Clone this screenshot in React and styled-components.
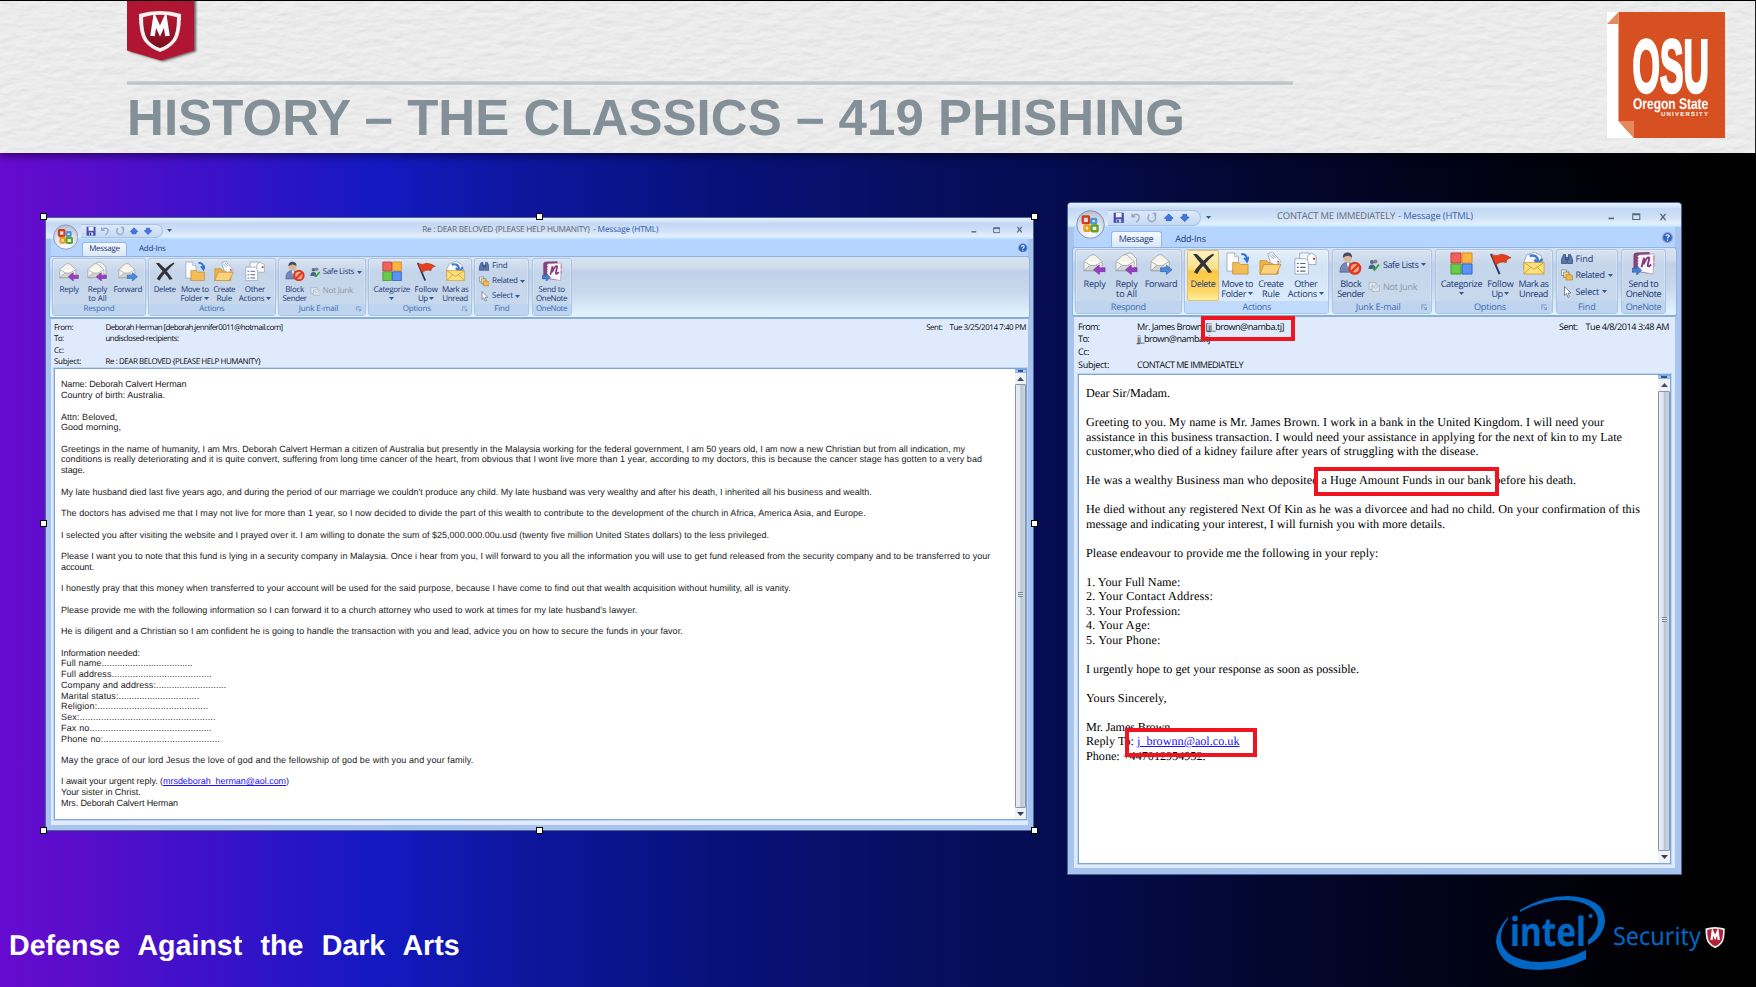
import React, { useLayoutEffect, useRef, useState } from "react";
import styled, { createGlobalStyle, ThemeProvider, css } from "styled-components";

const Global = createGlobalStyle`
  * { box-sizing: border-box; }
  body { margin: 0; background: #000; text-rendering: geometricPrecision; }
  svg { display: block; flex: none; }
`;

/* horizontal and vertical lengths that follow the window's own scale */
const x = (n) => ({ theme }) => `${n * theme.sx}px`;
const y = (n) => ({ theme }) => `${n * theme.sy}px`;

const FitSpan = styled.span`
  display: inline-block;
  white-space: pre;
`;

/* Sets the letter spacing so that the text takes a given width. */
function Fit({ w, children }) {
  const ref = useRef(null);
  const [gap, setGap] = useState(0);
  useLayoutEffect(() => {
    const el = ref.current;
    el.style.letterSpacing = "0px";
    const natural = el.getBoundingClientRect().width;
    const next = (w - natural) / el.textContent.length;
    el.style.letterSpacing = `${next}px`;
    setGap(next);
  }, [w]);
  return <FitSpan ref={ref} style={{ letterSpacing: `${gap}px` }}>{children}</FitSpan>;
}

/* ---------- slide ---------- */

const Slide = styled.div`
  width: 1756px;
  height: 987px;
  overflow: hidden;
  display: flex;
  flex-direction: column;
  font-family: "Liberation Sans", Arial, sans-serif;
  background: linear-gradient(90deg, #660bd0 0%, #5b0dcb 4%, #3812c8 13%, #1419c2 21.5%, #0f17a4 28%, #08117c 40%, #070f60 52%, #050b4e 61%, #030834 70%, #02041e 80%, #01020c 88%, #000 97%);
`;

const Header = styled.header`
  position: relative;
  height: 153px;
  flex: none;
  border-top: 1px solid #000;
  border-right: 1px solid #222;
  background: #ebebeb;
  box-shadow: 0 2px 9px rgba(0, 0, 0, 0.6);
  display: flex;
  justify-content: space-between;
  padding: 0 30px 0 127px;
`;

const Paper = styled.svg`
  position: absolute;
  inset: 0;
`;

const HeaderMain = styled.div`
  position: relative;
  width: 1166px;
  display: flex;
  flex-direction: column;
`;

const Rule = styled.div`
  height: 4px;
  margin-top: 16px;
  background: linear-gradient(#d3d8d9, #b9c0c2 50%, #cdd3d4);
`;

const Title = styled.h1`
  margin: 5px 0 0 0;
  font-size: 51px;
  line-height: 56px;
  font-weight: bold;
  color: #839097;
`;

const OsuBox = styled.div`
  position: relative;
  padding-top: 11px;
`;

const Stage = styled.main`
  height: 722px;
  flex: none;
  display: flex;
  align-items: flex-start;
  padding-left: 45px;
  gap: 33px;
`;

const Footer = styled.footer`
  flex: 1;
  display: flex;
  justify-content: space-between;
  padding: 20px 29px 0 9px;
`;

const Course = styled.div`
  padding-top: 33.5px;
  font-size: 28.6px;
  line-height: 34px;
  font-weight: bold;
  word-spacing: 10.3px;
  color: #fff;
`;

/* ---------- mail window ---------- */

const Frame = styled.section`
  position: relative;
  width: ${(p) => p.theme.w}px;
  height: ${(p) => p.theme.h}px;
  margin-top: ${(p) => p.theme.top}px;
  border: 1px solid #4a6590;
  border-radius: 4px 4px 0 0;
  background: #a7c4ef;
  display: flex;
  flex-direction: column;
  font-family: "Open Sans", "Noto Sans", sans-serif;
  font-size: ${(p) => p.theme.font}px;
  font-weight: 500;
  color: #1a3876;
`;

const TitleBar = styled.div`
  height: ${(p) => p.theme.bar}px;
  flex: none;
  display: flex;
  align-items: center;
  border-radius: 3px 3px 0 0;
  background: linear-gradient(#e6f1ff 0, #d3e4fa 16%, #c3d8f4 24%, #cfe1f8 60%, #e3effd 88%, #b9e0fb 100%);
`;

const QuickBar = styled.div`
  display: flex;
  align-items: center;
  gap: ${x(5)};
  height: ${y(16)};
  width: ${x(93)};
  margin-top: ${y(5)};
  margin-left: ${x(40)};
  padding-left: ${x(5)};
  border: 1px solid #a9c2e4;
  border-left: none;
  border-radius: 0 9px 9px 0;
  background: linear-gradient(#dce9fa, #c6d9f2);
`;

const MoreMark = styled.div`
  width: ${x(14)};
  margin-top: ${y(4)};
  display: flex;
  justify-content: center;
`;

const Caption = styled.div`
  margin-left: ${(p) => p.theme.captionGap}px;
  padding-top: 2px;
  font-weight: 400;
  font-size: ${(p) => p.theme.font + 0.3}px;
  line-height: 12px;
  color: #62676f;
  display: flex;
`;

const CaptionApp = styled.span`
  color: #3460aa;
  padding-left: 3px;
`;

const Controls = styled.div`
  margin-left: auto;
  padding-top: ${y(3)};
  padding-right: ${(p) => p.theme.controlsRight}px;
  display: flex;
  align-items: center;
  gap: ${x(18)};
`;

const Orb = styled.div`
  position: absolute;
  left: ${x(7.5)};
  top: ${(p) => p.theme.orbTop}px;
`;

const TabRow = styled.div`
  height: ${(p) => p.theme.tabs}px;
  flex: none;
  margin: 0 ${(p) => p.theme.edge}px;
  padding-left: ${(p) => p.theme.tabInset}px;
  display: flex;
  align-items: flex-end;
  background: #b5d4ff;
  line-height: ${y(16)};
`;

const Tab = styled.div`
  width: ${x(51)};
  height: ${y(16)};
  display: flex;
  justify-content: center;
  ${(p) => p.$on && css`
    background: linear-gradient(#f4f9ff, #dbe8f8);
    border: 1px solid #93b9ea;
    border-bottom: none;
    border-radius: 3px 3px 0 0;
    line-height: ${y(14)};
  `}
  ${(p) => !p.$on && css`margin-left: ${x(3.5)};`}
`;

const Help = styled.div`
  margin-left: auto;
  padding-right: ${(p) => p.theme.helpRight}px;
  align-self: center;
`;

const Ribbon = styled.div`
  height: ${(p) => p.theme.ribbon}px;
  flex: none;
  margin: 0 ${(p) => p.theme.edge - 2}px;
  padding: 1px 2px 1px;
  display: flex;
  gap: ${x(2.6)};
  border: 1px solid #8fb4e2;
  border-bottom: 2px solid #8badd3;
  border-radius: 3px;
  background: linear-gradient(#d8e3f1 0, #d0dcec 18%, #c0d0e8 24%, #c8d9ed 60%, #def0fb 92%, #dff3fd 100%);
`;

const GroupBox = styled.div`
  width: ${(p) => x(p.$w)};
  display: flex;
  flex-direction: column;
  border: 1px solid #a9c4e4;
  border-radius: 3px;
  box-shadow: inset 0 0 0 1px rgba(255, 255, 255, 0.25);
  background: ${(p) => (p.$hot ? "linear-gradient(#e6f0fb, #d3e4f7 25%, #dfedfc)" : "linear-gradient(#d9e4f2, #c5d5ea 24%, #c9d9ee)")};
`;

const GroupBody = styled.div`
  flex: 1;
  min-height: 0;
  display: flex;
  padding-left: ${(p) => x(p.$pad)};
`;

const GroupLabel = styled.div`
  height: ${y(12)};
  flex: none;
  line-height: ${y(11.5)};
  padding-right: ${(p) => (p.$launch ? x(8) : "0")};
  display: flex;
  justify-content: center;
  position: relative;
  color: #3e6bae;
  background: ${(p) => (p.$hot ? "#c0dbfb" : "#bfd5ef")};
`;

const Launcher = styled.div`
  position: absolute;
  right: ${x(4)};
  top: ${y(2.5)};
`;

const Tool = styled.div`
  width: ${(p) => x(p.$w)};
  height: ${y(51)};
  padding-top: ${y(2)};
  display: flex;
  flex-direction: column;
  align-items: center;
  line-height: ${y(10)};
  border-radius: 2px;
  ${(p) => p.$hot && css`
    background: linear-gradient(#fdf3c6 0, #fbdf8c 36%, #fcc841 42%, #fdd767 80%, #fff0a0);
    box-shadow: inset 0 0 0 1px #e3c16c;
  `}
`;

const ToolText = styled.div`
  display: flex;
  align-items: center;
  gap: ${x(2)};
  margin-top: ${(p) => (p.$first ? y(3.8) : "0")};
  ${(p) => p.$alone && css`margin-top: ${y(3.5)};`}
`;

const SmallTools = styled.div`
  display: flex;
  flex-direction: column;
  padding-top: ${(p) => y(p.$top)};
  gap: ${(p) => y(p.$gap)};
`;

const SmallTool = styled.div`
  height: ${y(12)};
  line-height: ${y(12)};
  display: flex;
  align-items: center;
  gap: ${x(3)};
  color: ${(p) => (p.$off ? "#8f98a5" : "inherit")};
`;

const Inner = styled.div`
  flex: 1;
  min-height: 0;
  margin: 0 ${(p) => p.theme.edge}px ${(p) => p.theme.edge}px;
  padding: ${(p) => p.theme.innerPad};
  display: flex;
  flex-direction: column;
  background: #dfebfd;
`;

const Fields = styled.div`
  position: relative;
  flex: none;
  display: grid;
  grid-template-columns: ${(p) => p.theme.fieldCol}px 1fr auto;
  grid-auto-rows: ${(p) => p.theme.fieldRow}px;
  align-items: center;
  line-height: ${(p) => p.theme.fieldRow}px;
  color: #0c0c0c;
  height: ${(p) => p.theme.fieldsH}px;
  padding: 0 ${(p) => p.theme.sentRight}px 0 0;
`;

const Sent = styled.div`
  display: flex;
  gap: ${x(8)};
`;

const Cell = styled.div`
  grid-column: ${(p) => p.$col};
  grid-row: ${(p) => p.$row};
  height: 100%;
`;

const Sheet = styled.div`
  flex: 1;
  min-height: 0;
  display: flex;
  justify-content: space-between;
  border: 1px solid #7fa6dc;
  outline: 1px solid #bdd4f2;
  background: #fff;
`;

const Letter = styled.div`
  position: relative;
  padding: ${(p) => p.theme.letterPad};
  font-family: ${(p) => p.theme.letterFont};
  font-weight: 400;
  font-size: ${(p) => p.theme.letterSize}px;
  line-height: ${(p) => p.theme.letterLine}px;
  color: ${(p) => p.theme.ink};
`;

const Line = styled.div`
  height: ${(p) => p.theme.letterLine}px;
`;

const Link = styled.span`
  color: #1a10ff;
  text-decoration: underline;
`;

const Bar = styled.div`
  width: ${(p) => p.theme.scroll}px;
  display: flex;
  flex-direction: column;
  align-items: center;
  background: #f1f1f3;
`;

const Splitter = styled.div`
  width: 100%;
  height: 4px;
  border-top: 1px solid #7ba6e4;
  background: linear-gradient(90deg, #a6c8f7 25%, #34568c 25%, #34568c 75%, #a6c8f7 75%);
  border-bottom: 1px solid #8db5ee;
`;

const ArrowBox = styled.div`
  height: ${(p) => p.theme.arrowBox}px;
  display: flex;
  align-items: center;
`;

const Thumb = styled.div`
  flex: 1;
  width: 100%;
  display: flex;
  align-items: center;
  justify-content: center;
  border: 1px solid #8a94ab;
  border-radius: 1px;
  background: linear-gradient(90deg, #e9edf2, #e2e7ee 40%, #b9c7da 55%, #c9d3e2 90%);
`;

const Grip = styled.div`
  width: 5px;
  height: 5px;
  margin-bottom: 4px;
  border-top: 1px solid #7a8496;
  border-bottom: 1px solid #7a8496;
  background: linear-gradient(#dfe5ee 1px, #7a8496 1px, #7a8496 2px, #dfe5ee 2px);
`;

const Mark = styled.div`
  position: absolute;
  left: ${(p) => p.$x}px;
  top: ${(p) => p.$y}px;
  width: ${(p) => p.$w}px;
  height: ${(p) => p.$h}px;
  border: 4px solid #ee1520;
  z-index: 2;
`;

const Handle = styled.div`
  position: absolute;
  left: ${(p) => p.$x}px;
  top: ${(p) => p.$y}px;
  width: 7px;
  height: 7px;
  border: 1px solid #000;
  background: #fff;
`;

/* ---------- drawings ---------- */

const Icon = styled.svg.attrs({ viewBox: "0 0 24 24" })`
  width: ${(p) => x(p.$s || 23)};
  height: ${(p) => y(p.$s || 23)};
`;

const Caret = () => (
  <svg width="5" height="3" viewBox="0 0 5 3"><path d="M0 0H5L2.5 3Z" fill="#35568f" /></svg>
);

const Envelope = ({ back }) => (
  <g stroke="#8d949f" strokeWidth=".7">
    {back && <path d="M7 8L12 1.500L17 1L22.500 7V16H9Z" fill="#f3f3f0" />}
    <path d="M1 10L8 3.500Q10.500 2 13 3.500L20 10V19.500H1Z" fill="#f5f3ea" />
    <path d="M1 19.500L8 13H13L20 19.500Z" fill="#d3d3cf" />
    <path d="M1 10L8 14H13L20 10" fill="#fffdf5" />
  </g>
);

const art = {
  reply: <><Envelope /><path d="M11 18.500L17 13.500V16.500H23V20.500H17V23.500Z" fill="#9a3fc0" stroke="#6d2393" strokeWidth=".6" /></>,
  replyAll: <><Envelope back /><path d="M11 18.500L17 13.500V16.500H23V20.500H17V23.500Z" fill="#9a3fc0" stroke="#6d2393" strokeWidth=".6" /></>,
  forward: <><Envelope /><path d="M23 18.500L17 13.500V16.500H11V20.500H17V23.500Z" fill="#4b8be0" stroke="#2457a8" strokeWidth=".6" /></>,
  del: <path d="M1 2L5 2Q9 6 12 9Q17 4 22 1.500L23 3Q18 7 14 12Q18 17 21 21L17 22Q15 18 11.500 14.500Q8 18 5.500 23L2 21Q5 16 9 12Q5 7 1 2Z" fill="#33343a" />,
  move: <><path d="M1 1H9L13 5V20H1Z" fill="#fdfdff" stroke="#8e9db5" strokeWidth=".8" /><path d="M9 1V5H13" fill="#dfe6f2" stroke="#8e9db5" strokeWidth=".6" /><path d="M16 2Q22 2 22 8M19 6L22 10L24 5" fill="none" stroke="#2f6fd0" strokeWidth="2" /><path d="M7 11H13L15 13H23V23H7Z" fill="#f2bd57" stroke="#c48a28" strokeWidth=".8" /></>,
  create: <><path d="M1 9H8L10 11H20V23H1Z" fill="#eeb24a" stroke="#c48a28" strokeWidth=".8" /><path d="M9 2L14 0L23 10L17 14L12 11Z" fill="#f8fafd" stroke="#8e9db5" strokeWidth=".8" /><path d="M11 3L15 7M13 2L17 6" stroke="#7d8797" strokeWidth=".8" /><circle cx="20" cy="10" r="1" fill="#d43" /><path d="M5 13H23L18 23H1Z" fill="#fbd27c" stroke="#c48a28" strokeWidth=".8" /></>,
  other: <><path d="M6 1H16V12H6Z" fill="#f4f7fc" stroke="#8e9db5" strokeWidth=".8" /><path d="M14 4L18 1L23 4V13H14Z" fill="#fbfbfd" stroke="#8e9db5" strokeWidth=".8" /><rect x="20" y="6" width="2" height="2" fill="#d22" /><path d="M1 7H12L15 10V23H1Z" fill="#fdfeff" stroke="#8e9db5" strokeWidth=".8" /><path d="M3 12H5M6.500 12H12M3 16H5M6.500 16H12M3 20H5M6.500 20H12" stroke="#56678c" strokeWidth="1.200" /></>,
  block: <><circle cx="9" cy="6" r="4.600" fill="#d9b79b" /><path d="M4 6Q4 0 9.500 .500Q14 1 13.500 6Q10 2 4 6Z" fill="#474c58" /><path d="M1 21Q1 11 9 11Q16 11 17 21Z" fill="#7288ba" stroke="#43568a" strokeWidth=".7" /><path d="M8 11L9.500 17L11 11Z" fill="#fff" /><circle cx="16.500" cy="17" r="5.600" fill="#f6a68c" stroke="#dd3a1c" strokeWidth="2.400" /><path d="M12.500 21L20.500 13" stroke="#dd3a1c" strokeWidth="2.400" /></>,
  categorize: <><path d="M1 1H11.500V11.500H1Z" fill="#f2605a" stroke="#c83a35" /><path d="M12.500 1H23V11.500H12.500Z" fill="#fbb440" stroke="#d58a1c" /><path d="M1 12.500H11.500V23H1Z" fill="#6acb4a" stroke="#3f9d2c" /><path d="M12.500 12.500H23V23H12.500Z" fill="#5b93f5" stroke="#2f62c8" /></>,
  flag: <><path d="M2 2L11 23" stroke="#27355c" strokeWidth="2" /><path d="M2 2.500Q8 5 12 2.500Q16 2 23 6Q18 7 18 11Q12 9 7 13.500Z" fill="#e2401f" stroke="#a92712" strokeWidth=".6" /></>,
  unread: <><path d="M2 10L5 3L13 0L20 4L22 11V18H2Z" fill="#f6f9fd" stroke="#8e9db5" strokeWidth=".8" /><path d="M8 4Q16 2 17 10M13 8L17.500 13L21 7" fill="none" stroke="#3f78d8" strokeWidth="2.600" /><path d="M2 11H23V23H2Z" fill="#fce07e" stroke="#c89b2d" strokeWidth=".8" /><path d="M2 11L12.500 18L23 11M2 23L9 16M23 23L16 16" fill="none" stroke="#c89b2d" strokeWidth=".9" /></>,
  onenote: <><path d="M2 3Q2 1 5 1L18 .500L17 22L5 20Q2 20 2 17Z" fill="#8b4480" stroke="#66305f" strokeWidth=".7" /><path d="M7 3L23 2L22 23L6 20Z" fill="#fbf6fa" stroke="#a98aa6" strokeWidth=".6" /><path d="M6 5H8M6 8H8M6 11H8M6 14H8" stroke="#fff" strokeWidth="1.400" /><path d="M10 16L12.500 6Q12.500 9 12 13Q16 4 18 6Q18 8 16.500 13Q16 17 20 13" fill="none" stroke="#8b3a82" strokeWidth="2" /><path d="M23 4V9M23 11V15" stroke="#c98abf" strokeWidth="1.500" /><path d="M0 17H5V14L10 19L5 24V21H0Z" fill="#4b80cf" stroke="#2b559b" strokeWidth=".6" /></>,
  safe: <><circle cx="8" cy="6" r="4" fill="#5c6474" /><circle cx="15" cy="5" r="4" fill="#7b8392" /><path d="M1 20Q1 11 8 11Q15 11 15 20Z" fill="#4a5f8c" /><path d="M9 17L13 22L22 11" fill="none" stroke="#2fa32b" strokeWidth="3.500" /></>,
  notJunk: <g fill="#dde4ee" stroke="#a5afbd" strokeWidth="1.500"><path d="M2 3H16V17H2Z" /><path d="M8 9H23V21H8Z" /><path d="M8 9L15.500 15L23 9" /></g>,
  find: <g fill="#5b78ab" stroke="#27427a" strokeWidth="1.400"><path d="M5 3H9V8L11 12V21H1V13Z" /><path d="M15 3H19L23 13V21H13V12L15 8Z" /><path d="M9 9H15V13H9Z" /></g>,
  related: <g stroke="#5a5f6b" strokeWidth="1.200"><path d="M1 2H11V13H1Z" fill="#fff" /><path d="M5 6H16V17H5Z" fill="#f6d78a" /><path d="M10 11H20L23 14V22H10Z" fill="#efb94b" stroke="#a97a1e" /></g>,
  select: <path d="M7 1V19L11 15L14 23L17 21.500L14 14H20Z" fill="#fff" stroke="#5c6880" strokeWidth="1.500" />,
  save: <><path d="M2 2H22V22H2Z" fill="#4a50b8" stroke="#2f3590" /><path d="M6 2H18V11H6Z" fill="#f0f3fc" /><path d="M7 15H17V22H7Z" fill="#c9cfee" /><path d="M9 16H12V22H9Z" fill="#2f3590" /></>,
  undo: <path d="M4 3V10H11M5 9Q12 2 18 7Q22 14 13 21" fill="none" stroke="#98a8c2" strokeWidth="3" />,
  redo: <path d="M14 3H20V9M7 5Q1 13 7 18Q14 23 19 16Q21 11 18 6" fill="none" stroke="#98a8c2" strokeWidth="3" />,
  up: <path d="M12 4L21 13L17 14V18H7V14L3 13Z" fill="#3f78e0" stroke="#2358bd" strokeWidth="1.500" />,
  down: <path d="M12 20L21 11L16 10V5H8V10L3 11Z" fill="#3f78e0" stroke="#2358bd" strokeWidth="1.500" />,
  launch: <path d="M3 20V3H20M9 9L19 19M20 11V20H11" fill="none" stroke="#5d83b8" strokeWidth="2.500" />,
  min: <path d="M2 20H22" stroke="#5c6878" strokeWidth="6" />,
  max: <path d="M2 5H22V21H2ZM2 8H22" fill="none" stroke="#5c6878" strokeWidth="3" />,
  close: <path d="M2 2H7L12 9L17 2H22L15 12L22 22H17L12 15L7 22H2L9 12Z" fill="#5c6878" />,
};

const Pic = ({ n, s }) => <Icon $s={s}>{art[n]}</Icon>;

const OrbArt = styled.svg.attrs({ viewBox: "0 0 30 30" })`
  width: ${x(29)};
  height: ${y(29)};
`;

const HelpArt = styled.svg.attrs({ viewBox: "0 0 12 12" })`
  width: ${x(11)};
  height: ${y(11)};
`;

function OfficeOrb({ id }) {
  return (
    <OrbArt>
      <defs>
        <radialGradient id={id} cx="50%" cy="80%" r="75%">
          <stop offset="0" stopColor="#fff" />
          <stop offset=".6" stopColor="#dfe3ec" />
          <stop offset="1" stopColor="#b9c1d2" />
        </radialGradient>
      </defs>
      <circle cx="15" cy="15" r="14.300" fill={`url(#${id})`} stroke="#7d8bab" strokeWidth=".9" />
      <g fill="none" strokeWidth="2.500">
        <rect x="7" y="6.800" width="6.500" height="6.800" rx=".8" stroke="#d23c18" />
        <rect x="15.800" y="9.200" width="5" height="4.600" rx=".8" stroke="#4a94dd" />
        <rect x="8.800" y="16" width="5" height="5.500" rx=".8" stroke="#f09a18" />
        <rect x="16" y="16" width="6.300" height="6" rx=".8" stroke="#5fa52b" />
      </g>
    </OrbArt>
  );
}

/* ---------- ribbon data ---------- */

const groups = [
  { label: ["Respond", 35], w: 106.7, pad: 2.5, tools: [
    { icon: "reply", w: 32, text: [["Reply", 22]] },
    { icon: "replyAll", w: 32, text: [["Reply", 22], ["to All", 21]] },
    { icon: "forward", w: 37, text: [["Forward", 32.5]] } ] },
  { label: ["Actions", 28.5], w: 145, pad: 1.5, id: "actions", tools: [
    { icon: "del", w: 32.5, text: [["Delete", 25]], id: "delete" },
    { icon: "move", w: 36, text: [["Move to", 31.5], ["Folder", 25, true]] },
    { icon: "create", w: 31, text: [["Create", 25], ["Rule", 17.5]] },
    { icon: "other", w: 39, text: [["Other", 23], ["Actions", 29, true]] } ] },
  { label: ["Junk E-mail", 45], w: 100.5, pad: 1, launch: true,
    tools: [{ icon: "block", w: 34, text: [["Block", 21.5], ["Sender", 27.5]] }],
    small: { top: 8.5, gap: 10, items: [["safe", "Safe Lists", 35.5, true], ["notJunk", "Not Junk", 34.5, false, true]] } },
  { label: ["Options", 32], w: 118, pad: 4, launch: true, tools: [
    { icon: "categorize", w: 43, text: [["Categorize", 41.5], ["", 0, true]] },
    { icon: "flag", w: 35, text: [["Follow", 26.5], ["Up", 11, true]] },
    { icon: "unread", w: 31, text: [["Mark as", 30], ["Unread", 29]] } ] },
  { label: ["Find", 17.5], w: 62.5, pad: 4, tools: [],
    small: { top: 2.5, gap: 4.7, items: [["find", "Find", 17.5], ["related", "Related", 29, true], ["select", "Select", 23.5, true]] } },
  { label: ["OneNote", 35.5], w: 45.5, pad: 0, tools: [
    { icon: "onenote", w: 43.5, text: [["Send to", 30], ["OneNote", 35.5]] } ] },
];

function RibbonGroup({ g, hot, sx }) {
  const lit = hot && g.id === "actions";
  return (
    <GroupBox $w={g.w} $hot={lit}>
      <GroupBody $pad={g.pad}>
        {g.tools.map((t) => (
          <Tool key={t.icon} $w={t.w} $hot={hot && t.id === "delete"}>
            <Pic n={t.icon} />
            {t.text.map(([s, w, more], i) => (
              <ToolText key={i} $first={i === 0} $alone={!s}>
                {s && <Fit w={w * sx}>{s}</Fit>}
                {more && <Caret />}
              </ToolText>
            ))}
          </Tool>
        ))}
        {g.small && (
          <SmallTools $top={g.small.top} $gap={g.small.gap}>
            {g.small.items.map(([icon, s, w, more, off]) => (
              <SmallTool key={s} $off={off}>
                <Pic n={icon} s={12} />
                <Fit w={w * sx}>{s}</Fit>
                {more && <Caret />}
              </SmallTool>
            ))}
          </SmallTools>
        )}
      </GroupBody>
      <GroupLabel $hot={lit} $launch={g.launch}>
        <Fit w={g.label[1] * sx}>{g.label[0]}</Fit>
        {g.launch && <Launcher><Pic n="launch" s={6.5} /></Launcher>}
      </GroupLabel>
    </GroupBox>
  );
}

function MailWindow({ theme, mail, fieldMarks, letterMarks, children }) {
  const { sx } = theme;
  return (
    <ThemeProvider theme={theme}>
      <Frame>
        <TitleBar>
          <QuickBar>
            {["save", "undo", "redo", "up", "down"].map((n) => <Pic key={n} n={n} s={11.5} />)}
          </QuickBar>
          <MoreMark><Caret /></MoreMark>
          <Caption>
            <Fit w={mail.caption[1]}>{mail.caption[0]}</Fit>
            <CaptionApp><Fit w={mail.app}>- Message (HTML)</Fit></CaptionApp>
          </Caption>
          <Controls>
            <Pic n="min" s={6.5} />
            <Pic n="max" s={8.5} />
            <Pic n="close" s={8} />
          </Controls>
        </TitleBar>
        <TabRow>
          <Tab $on><Fit w={34.5 * sx}>Message</Fit></Tab>
          <Tab><Fit w={30.5 * sx}>Add-Ins</Fit></Tab>
          <Help>
            <HelpArt>
              <circle cx="6" cy="6" r="5.400" fill="#2d62c9" stroke="#8fa7cf" strokeWidth="1.200" />
              <path d="M4.200 4.500Q4.500 3 6 3Q8 3.200 7.600 5Q6 6 6 7.200M6 8.300V9.600" fill="none" stroke="#fff" strokeWidth="1.300" />
            </HelpArt>
          </Help>
        </TabRow>
        <Ribbon>
          {groups.map((g) => <RibbonGroup key={g.label[0]} g={g} hot={mail.hot} sx={sx} />)}
        </Ribbon>
        <Inner>
          <Fields>
            {mail.fields.map(([name, nw, value, vw], i) => (
              <React.Fragment key={name}>
                <Cell $col={1} $row={i + 1}><Fit w={nw}>{name}</Fit></Cell>
                <Cell $col={2} $row={i + 1}>{value && <Fit w={vw}>{value}</Fit>}</Cell>
              </React.Fragment>
            ))}
            <Cell $col={3} $row={1}>
              <Sent><Fit w={18.5 * sx}>Sent:</Fit><Fit w={mail.sent[1]}>{mail.sent[0]}</Fit></Sent>
            </Cell>
            {fieldMarks}
          </Fields>
          <Sheet>
            <Letter>
              {mail.lines.map((l, i) => (
                <Line key={i}>
                  {l && (
                    <Fit w={l[1]}>
                      {l[0]}{l[2] && <Link>{l[2]}</Link>}{l[3]}
                    </Fit>
                  )}
                </Line>
              ))}
              {letterMarks}
            </Letter>
            <Bar>
              <Splitter />
              <ArrowBox><svg width="7" height="4" viewBox="0 0 7 4"><path d="M0 4H7L3.500 0Z" fill="#3c4f73" /></svg></ArrowBox>
              <Thumb><Grip /></Thumb>
              <ArrowBox><svg width="7" height="4" viewBox="0 0 7 4"><path d="M0 0H7L3.500 4Z" fill="#2c3f63" /></svg></ArrowBox>
            </Bar>
          </Sheet>
        </Inner>
        <Orb><OfficeOrb id={`orb-${theme.w}`} /></Orb>
        {children}
      </Frame>
    </ThemeProvider>
  );
}

/* ---------- mails ---------- */

const dots = (n) => ".".repeat(n);

const herman = {
  caption: ["Re : DEAR BELOVED {PLEASE HELP HUMANITY}", 168],
  app: 65,
  sent: ["Tue 3/25/2014 7:40 PM", 76.5],
  fields: [
    ["From:", 19, "Deborah Herman [deborah.jennifer0011@hotmail.com]", 177],
    ["To:", 9.5, "undisclosed-recipients:", 73],
    ["Cc:", 9.5],
    ["Subject:", 27, "Re : DEAR BELOVED {PLEASE HELP HUMANITY}", 155],
  ],
  lines: [
    ["Name: Deborah Calvert Herman", 125.3],
    ["Country of birth: Australia.", 104],
    null,
    ["Attn: Beloved,", 56.3],
    ["Good morning,", 60],
    null,
    ["Greetings in the name of humanity, I am Mrs. Deborah Calvert Herman a citizen of Australia but presently in the Malaysia working for the federal government, I am 50 years old, I am now a new Christian but from all indication, my", 904],
    ["conditions is really deteriorating and it is quite convert, suffering from long time cancer of the heart, from obvious that I wont live more than 1 year, according to my doctors, this is because the cancer stage has gotten to a very bad", 921],
    ["stage.", 23.7],
    null,
    ["My late husband died last five years ago, and during the period of our marriage we couldn't produce any child. My late husband was very wealthy and after his death, I inherited all his business and wealth.", 810.7],
    null,
    ["The doctors has advised me that I may not live for more than 1 year, so I now decided to divide the part of this wealth to contribute to the development of the church in Africa, America Asia, and Europe.", 804.7],
    null,
    ["I selected you after visiting the website and I prayed over it. I am willing to donate the sum of $25,000.000.00u.usd (twenty five million United States dollars) to the less privileged.", 708],
    null,
    ["Please I want you to note that this fund is lying in a security company in Malaysia. Once i hear from you, I will forward to you all the information you will use to get fund released from the security company and to be transferred to your", 929.3],
    ["account.", 33],
    null,
    ["I honestly pray that this money when transferred to your account will be used for the said purpose, because I have come to find out that wealth acquisition without humility, all is vanity.", 729.7],
    null,
    ["Please provide me with the following information so I can forward it to a church attorney who used to work at times for my late husband's lawyer.", 576.3],
    null,
    ["He is diligent and a Christian so I am confident he is going to handle the transaction with you and lead, advice you on how to secure the funds in your favor.", 621.7],
    null,
    ["Information needed:", 79],
    ["Full name" + dots(35), 131.7],
    ["Full address" + dots(38), 150.7],
    ["Company and address:" + dots(27), 165.3],
    ["Marital status:" + dots(31), 138.3],
    ["Religion:" + dots(42), 147.3],
    ["Sex:" + dots(51), 154.7],
    ["Fax no" + dots(46), 150.7],
    ["Phone no:" + dots(44), 159],
    null,
    ["May the grace of our lord Jesus the love of god and the fellowship of god be with you and your family.", 412.3],
    null,
    ["I await your urgent reply. (", 228, "mrsdeborah_herman@aol.com", ")"],
    ["Your sister in Christ.", 79.7],
    ["Mrs. Deborah Calvert Herman", 117],
  ],
};

const brown = {
  hot: true,
  caption: ["CONTACT ME IMMEDIATELY", 118],
  app: 75,
  sent: ["Tue 4/8/2014 3:48 AM", 83.5],
  fields: [
    ["From:", 21.5, "Mr. James Brown, [jj_brown@namba.tj]", 147],
    ["To:", 11, "jj_brown@namba.tj", 73],
    ["Cc:", 11],
    ["Subject:", 31, "CONTACT ME IMMEDIATELY", 106],
  ],
  lines: [
    ["Dear Sir/Madam.", 84],
    null,
    ["Greeting to you. My name is Mr. James Brown. I work in a bank in the United Kingdom. I will need your", 518],
    ["assistance in this business transaction. I would need your assistance in applying for the next of kin to my Late", 536],
    ["customer,who died of a kidney failure after years of struggling with the disease.", 392.5],
    null,
    ["He was a wealthy Business man who deposited a Huge Amount Funds in our bank before his death.", 490],
    null,
    ["He died without any registered Next Of Kin as he was a divorcee and had no child. On your confirmation of this", 554],
    ["message and indicating your interest, I will furnish you with more details.", 359],
    null,
    ["Please endeavour to provide me the following in your reply:", 292.5],
    null,
    ["1. Your Full Name:", 94.5],
    ["2. Your Contact Address:", 127],
    ["3. Your Profession:", 94.5],
    ["4. Your Age:", 64.5],
    ["5. Your Phone:", 74.5],
    null,
    ["I urgently hope to get your response as soon as possible.", 273],
    null,
    ["Yours Sincerely,", 80.5],
    null,
    ["Mr. James Brown.", 87],
    ["Reply To: ", 153.5, "j_brownn@aol.co.uk"],
    ["Phone: +447012954952.", 119.5],
  ],
};

const hermanTheme = {
  sx: 0.879, sy: 0.9, w: 989, h: 614, top: 64, font: 8,
  bar: 21, tabs: 17, ribbon: 63, edge: 5, tabInset: 31, orbTop: 5.5, helpRight: 0, captionGap: 247, controlsRight: 10,
  innerPad: "3px 1px 5px 3px", fieldCol: 51.5, fieldRow: 11.4, fieldsH: 46, sentRight: 1, scroll: 11, arrowBox: 11,
  letterPad: "10.300px 0 0 6px", letterFont: '"Liberation Sans", Arial, sans-serif',
  letterSize: 9, letterLine: 10.74, ink: "#1c1c1c",
};

const brownTheme = {
  sx: 1, sy: 1, w: 615, h: 673, top: 49, font: 9.1,
  bar: 24, tabs: 20, ribbon: 70, edge: 6, tabInset: 36.5, orbTop: 7, helpRight: 2, captionGap: 62, controlsRight: 14.5,
  innerPad: "3.500px 4px 4px", fieldCol: 59, fieldRow: 12.9, fieldsH: 53.5, sentRight: 2, scroll: 12, arrowBox: 12,
  letterPad: "11px 0 0 7px", letterFont: '"Liberation Serif", "Times New Roman", serif',
  letterSize: 12.2, letterLine: 14.52, ink: "#000",
};

const handles = [[-6, -5], [490, -5], [985, -5], [-6, 302], [985, 302], [-6, 609], [490, 609], [985, 609]];

/* ---------- logos ---------- */

const ShieldShape = "M1 3Q11 0 22 0Q33 0 43 3Q43 24 37 31Q31 38 22 41Q13 38 7 31Q1 24 1 3Z";

const Badge = () => (
  <svg width="74" height="64" viewBox="0 0 74 64">
    <defs>
      <filter id="drop" x="-20%" y="-20%" width="150%" height="150%">
        <feDropShadow dx="2" dy="1" stdDeviation="1.300" floodColor="#333" floodOpacity=".75" />
      </filter>
      <linearGradient id="shield" x1="0" y1="0" x2="0" y2="1">
        <stop offset="0" stopColor="#b31a30" />
        <stop offset="1" stopColor="#7c0d1e" />
      </linearGradient>
    </defs>
    <path d="M0 -4H67V49.500L34 59.500L0 49.500Z" fill="#b01830" filter="url(#drop)" />
    <g transform="translate(11 10)">
      <path d={ShieldShape} fill="#f3f1f2" />
      <path d={ShieldShape} fill="url(#shield)" transform="translate(4.200 3.800) scale(.81)" />
      <path d="M14.500 25L17 9L22 20L27 9L29.500 25" fill="none" stroke="#fff" strokeWidth="4.600" />
    </g>
  </svg>
);

const Osu = () => (
  <svg width="118" height="126" viewBox="0 0 118 126">
    <path d="M0 0H118V126H0Z" fill="#fff" />
    <path d="M11.500 0H118V126H27L11.500 109Z" fill="#d65021" />
    <path d="M0 12L11.500 0V12Z" fill="#e48a5e" />
    <path d="M11.500 109H27V126Z" fill="#e48a5e" />
    <g fill="#fff" fontFamily='"Liberation Sans", Arial, sans-serif' fontWeight="bold">
      <text transform="translate(25.500 79.500) scale(.46 1)" fontSize="75" stroke="#fff" strokeWidth="3" textLength="166" lengthAdjust="spacingAndGlyphs">OSU</text>
      <text transform="translate(26 96.500) scale(.8 1)" fontSize="15.500" textLength="94" lengthAdjust="spacingAndGlyphs">Oregon State</text>
      <text x="54" y="104" fontSize="6" textLength="47">UNIVERSITY</text>
    </g>
  </svg>
);

const Intel = () => (
  <svg width="232" height="78" viewBox="1495 895 232 78">
    <g fill="#0068c4">
      <path d="M1520 910Q1543 896 1568 896Q1606 898 1605 922Q1603 937 1588 945V940Q1598 932 1598 920Q1596 902 1566 900Q1542 900 1520 912Z" />
      <path d="M1508 917Q1496 930 1496 942Q1500 970 1538 970Q1565 970 1586 959V950Q1562 963 1538 962Q1504 960 1501 940Q1500 929 1508 919Z" />
      <circle cx="1590.500" cy="916" r="2" />
      <g fontFamily='"Noto Sans", "Open Sans", sans-serif'>
        <text x="1510" y="945.500" fontSize="40" fontWeight="bold" textLength="76" lengthAdjust="spacingAndGlyphs">intel</text>
        <text x="1613" y="945" fontSize="25" textLength="88" lengthAdjust="spacingAndGlyphs">Security</text>
      </g>
    </g>
    <g transform="translate(1705 927) scale(.46 .52)">
      <path d={ShieldShape} fill="#f3f1f2" />
      <path d={ShieldShape} fill="#b3203a" transform="translate(4 3.500) scale(.82)" />
      <path d="M14 25L16.500 9L22 20L27.500 9L30 25" fill="none" stroke="#fff" strokeWidth="4.800" />
    </g>
  </svg>
);

export default function App() {
  return (
    <>
      <Global />
      <Slide>
        <Header>
          <Paper width="1755" height="152">
            <filter id="paper" x="0" y="0" width="100%" height="100%">
              <feTurbulence type="fractalNoise" baseFrequency=".06 .14" numOctaves="4" seed="7" result="n" />
              <feDiffuseLighting in="n" surfaceScale=".5" diffuseConstant="1.080" lightingColor="#f0f0f0">
                <feDistantLight azimuth="250" elevation="62" />
              </feDiffuseLighting>
            </filter>
            <rect width="1755" height="152" filter="url(#paper)" />
          </Paper>
          <HeaderMain>
            <Badge />
            <Rule />
            <Title><Fit w={1058}>HISTORY – THE CLASSICS – 419 PHISHING</Fit></Title>
          </HeaderMain>
          <OsuBox><Osu /></OsuBox>
        </Header>
        <Stage>
          <MailWindow theme={hermanTheme} mail={herman}>
            {handles.map(([hx, hy]) => <Handle key={`${hx}/${hy}`} $x={hx} $y={hy} />)}
          </MailWindow>
          <MailWindow
            theme={brownTheme}
            mail={brown}
            fieldMarks={<Mark $x={123} $y={-4.5} $w={94} $h={25} />}
            letterMarks={<><Mark $x={235} $y={92} $w={185} $h={29} /><Mark $x={46} $y={353} $w={132} $h={29} /></>}
          />
        </Stage>
        <Footer>
          <Course>Defense Against the Dark Arts</Course>
          <Intel />
        </Footer>
      </Slide>
    </>
  );
}
